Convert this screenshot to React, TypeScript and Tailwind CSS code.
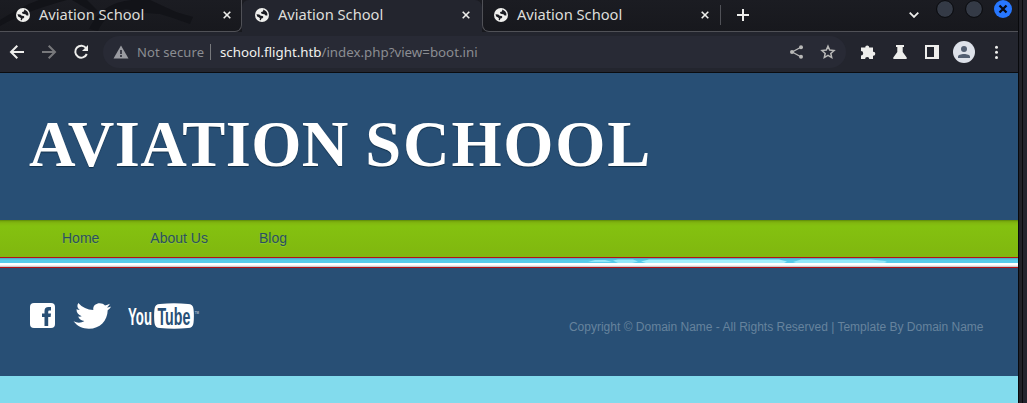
import React from "react";

function Globe() {
  return (
    <svg width="14" height="14" viewBox="0 0 14 14" className="shrink-0">
      <circle cx="7" cy="7" r="7" fill="#f0f0ee" />
      <path d="M8.4 1.6 11.1 3.2 12.3 5.3 12.4 7.6 10.6 7.5 9.4 6.3 7.6 6.1 6 5.2 6.2 4 7.9 3.5Z" fill="#1b1c22" />
      <path d="M1.5 6.2 4.3 6.6 5.8 7.8 7.7 8 8.4 9.1 7.6 10.2 6.4 10.6 5.9 12.3 4.6 12 5 10.4 4.1 9.4 2.2 8.6Z" fill="#1b1c22" />
    </svg>
  );
}

function Close() {
  return (
    <svg width="8" height="8" viewBox="0 0 8 8" className="shrink-0">
      <path d="M.7.7 7.3 7.3M7.3.7.7 7.3" stroke="#eeeeec" strokeWidth="1.6" />
    </svg>
  );
}

function TabContent() {
  return (
    <>
      <Globe />
      <span className="-mt-[2px] ml-[9px] w-[184px] text-[14.7px] leading-5 tracking-[-0.02px] text-[#dededb]">Aviation School</span>
      <Close />
    </>
  );
}

function TabStrip() {
  return (
    <div className="relative flex h-8 shrink-0 bg-[linear-gradient(#1b1c22,#17181d)]">
      <svg width="242" height="32" viewBox="0 0 242 32" className="absolute left-0 top-0">
        <path d="M0 20C13 12 25 5 39 0H67C45 6 25 12 0 26ZM72 0H87L98 11L94 13ZM89 29C98 11 111 2 132 0H150L176 12L193 17L190 24L173 18L160 14L145 13L126 9C113 12 103 19 98 31Z" fill="#121318" />
      </svg>
      <div className="relative flex h-8 w-[242px] items-center rounded-br-[7px] border-b border-r border-[#505157] pb-px pl-4"><TabContent /></div>
      <div className="relative flex h-8 w-[240px] items-center rounded-t-[7px] bg-[#23252e] pb-[2px] pl-[13px]"><TabContent /></div>
      <div className="relative flex h-8 w-[536px] items-center rounded-bl-[7px] border-b border-l border-[#505157] pb-px pl-[11px]">
        <TabContent />
        <span className="ml-[11px] h-5 w-px bg-[#505157]" />
        <svg width="12" height="12" viewBox="0 0 12 12" className="ml-4"><path d="M6 0v12M0 6h12" stroke="#eeeeec" strokeWidth="2" /></svg>
        <svg width="10" height="6" viewBox="0 0 10 6" className="ml-[160px]"><path d="m.7.7 4.3 4.2L9.3.7" fill="none" stroke="#eeeeec" strokeWidth="1.8" /></svg>
      </div>
      <svg width="78" height="20" viewBox="0 0 78 20" className="absolute right-1 top-0">
        <circle cx="9" cy="9" r="8.4" fill="#343a46" stroke="#08090c" />
        <circle cx="38" cy="9" r="8.4" fill="#343a46" stroke="#08090c" />
        <circle cx="67" cy="9" r="9" fill="#2777ff" />
        <path d="m63.5 5.5 7 7m0-7-7 7" stroke="#080b14" strokeWidth="2.3" />
      </svg>
    </div>
  );
}

function Toolbar() {
  return (
    <div className="flex h-[41px] shrink-0 items-center border-b border-[#0b0c0f] bg-[#23252e]">
      <svg width="100" height="40" viewBox="0 0 100 40" className="shrink-0" fill="none" strokeWidth="2">
        <path d="M24 20H11m6.3-6.3L11 20l6.3 6.3" stroke="#eeeeec" />
        <path d="M42 20h13m-6.3-6.3L55 20l-6.3 6.3" stroke="#77787b" />
        <path d="M86.2 16.2A6 6 0 1 0 86.8 22" stroke="#eeeeec" />
        <path d="M88 13v6h-6z" fill="#eeeeec" />
      </svg>
      <div className="ml-[3px] flex h-8 w-[743px] shrink-0 items-center rounded-full bg-[#282a35] pl-[10px] text-[13px]">
        <svg width="16" height="14" viewBox="0 0 16 14"><path d="M8 .5 15.5 13.5H.5Z" fill="#9a9ba1" /><path d="M8 5v4m0 1v2" stroke="#282a35" strokeWidth="1.6" /></svg>
        <span className="ml-2 w-[66px] whitespace-nowrap pt-[2px] tracking-[0.1px] text-[#8b8d92]">Not secure</span>
        <span className="ml-[7px] h-4 w-px bg-[#77787c]" />
        <span className="ml-[9px] whitespace-nowrap pt-[2px] text-[13.3px] text-[#8b8d92]"><span className="text-[#f2f2ef]">school.flight.htb</span>/index.php?view=boot.ini</span>
        <svg width="52" height="16" viewBox="0 0 52 16" className="ml-auto mr-[5px]" fill="none" stroke="#b9b9b8">
          <path d="M11.8 3.2 3.2 8l8.6 4.8" strokeWidth="1.3" />
          <g fill="#b9b9b8" stroke="none"><circle cx="12" cy="3.3" r="2" /><circle cx="3" cy="8" r="2" /><circle cx="12" cy="12.7" r="2" /></g>
          <path d="m39 2.2 1.7 3.9 4.3.4-3.2 2.9.9 4.2L39 11.4l-3.7 2.2.9-4.2L33 6.5l4.3-.4z" strokeWidth="1.5" />
        </svg>
      </div>
      <svg width="172" height="40" viewBox="0 0 172 40" className="shrink-0" fill="#eeeeec">
        <path d="M15 15.5h4.2a2 2 0 1 1 4 0H27v4.2h.3a2 2 0 0 1 0 4H27V27h-3.7a2.1 2.1 0 0 0-4.2 0H15v-3.6a2.2 2.2 0 0 0 0-4.4z" />
        <path d="M50 13h8v2h-1.3v5l4 5.5q.8 1.5-1 1.5H48.3q-1.8 0-1-1.5l4-5.5v-5H50z" />
        <path fillRule="evenodd" d="M79 13h14v14H79zm2 2v10h7V15z" />
        <circle cx="118" cy="20" r="11" fill="#dde1e9" />
        <g fill="#525e71"><circle cx="118" cy="17" r="3" /><path d="M112 26v-1.3c0-3.6 12-3.6 12 0V26z" /></g>
        <circle cx="150.5" cy="15.2" r="1.5" /><circle cx="150.5" cy="20.3" r="1.5" /><circle cx="150.5" cy="25.4" r="1.5" />
      </svg>
    </div>
  );
}

function SocialIcons() {
  return (
    <div className="flex items-start">
      <svg width="25" height="25" viewBox="0 0 25 25"><rect width="25" height="25" rx="4" fill="#fff" /><path d="M14.5 23V14H12v-3.5h2.5V8q0-4 4-4H21v3.5h-1.8q-1 0-1 1.2v1.8H21l-.4 3.5h-2.4v9z" fill="#284f75" /></svg>
      <svg width="38" height="26" viewBox="0 0 35.7 26" preserveAspectRatio="none" className="ml-[18px]"><path d="M.5 18.3c3.5 1.9 7 1.8 10.2-.2-3.1-.4-5-2.1-5.8-4.5 1.2.2 2.3.2 3.3-.3-3.4-1.4-5-3.9-4.9-7.1 1 .6 2 .8 3.1.8C3.9 5.1 3.5 2.8 5 0c3.7 4.5 8.4 6.8 14.1 7C18.4 2.9 21.5.2 25 .2c2 0 3.8.7 5.1 2.2 1.6-.3 3.1-.9 4.4-1.7-.5 1.6-1.4 2.8-2.7 3.7 1.5-.2 2.9-.5 4.1-1.1-.8 1.5-1.9 2.8-3.3 3.9C32.4 17.6 25.4 25.7 14.9 25.7 9.2 25.7 4.4 23.6.5 18.3Z" fill="#fff" /></svg>
      <svg width="74" height="26" viewBox="0 0 74 26" className="ml-[17px]" fontFamily="Liberation Sans, sans-serif" fontWeight="700">
        <text transform="translate(0 21.5) scale(.55 1)" fontSize="24" fill="#fff">You</text>
        <path d="M32 1Q46-.5 60 1q5 0 5.5 5 .8 7 0 14-.5 5-5.5 5-14 1.5-28 0-5-.1-5.5-5-.8-7 0-14Q27 1 32 1Z" fill="#fff" />
        <text transform="translate(29.5 21.5) scale(.59 1)" fontSize="24" fill="#284f75">Tube</text>
        <text x="66.7" y="11" fontSize="3" fill="#a9bac9">TM</text>
      </svg>
    </div>
  );
}

export default function App() {
  return (
    <div className="flex h-[403px] w-[1027px] overflow-hidden bg-[#23252e] font-['Noto_Sans',sans-serif]">
      <div className="flex w-[1018px] shrink-0 flex-col">
        <TabStrip />
        <Toolbar />
        <main className="flex flex-1 flex-col bg-[#82dbed] font-['Liberation_Sans',sans-serif]">
          <header className="flex h-[147px] shrink-0 bg-[#284f75] pl-[29px] pt-[34px]">
            <h1 className="whitespace-nowrap font-['Liberation_Serif',serif] text-[64.5px] font-bold leading-[75px] tracking-[0.4px] text-white [text-shadow:0_1px_1px_#102f49]">AVIATION <span className="tracking-[1.8px]">SCHOOL</span></h1>
          </header>
          <nav className="flex h-[37px] shrink-0 items-center bg-[linear-gradient(#578008_0px,#73a60c_1px,#82b710_3px,#84c110_6px,#80b70f)] pl-[62px] text-[14px] text-[#2b5060] [text-shadow:0_1px_1px_#92c638]">
            <a>Home</a><a className="ml-[51px]">About Us</a><a className="ml-[51px]">Blog</a>
          </nav>
          <div className="flex h-[11px] shrink-0 flex-col border-y border-[#b91016] bg-[linear-gradient(#48a6bd_0px,#58cae6_2px,#58cdec_5px,#fff_5px,#fff_7px,#b9bdbd_9px)]">
            <svg width="1018" height="5" viewBox="0 0 1018 5">
              <path d="M588 4l7-2h10l7 2ZM613 2.5l5-1h15l5 2-6 1.5h-14ZM793 4l8-2.5h70l14 1.5 2 1-3 1h-88Z" fill="#a4effc" opacity=".8" />
              <path d="M641 3.5l8-2h130l8 2-3 1.5H646Z" fill="#a4effc" />
            </svg>
          </div>
          <footer className="flex h-[108px] shrink-0 justify-between bg-[#284f75] pl-[30px] pr-[34.5px] pt-[35px]">
            <SocialIcons />
            <p className="pt-[15px] text-[12px] leading-[18px] text-[#66839d]">Copyright © Domain Name - All Rights Reserved | Template By Domain Name</p>
          </footer>
        </main>
      </div>
      <div className="w-[5px] border-x border-[#08090c] bg-[#202128]" />
      <div className="flex-1 bg-[#23242e]" />
    </div>
  );
}
